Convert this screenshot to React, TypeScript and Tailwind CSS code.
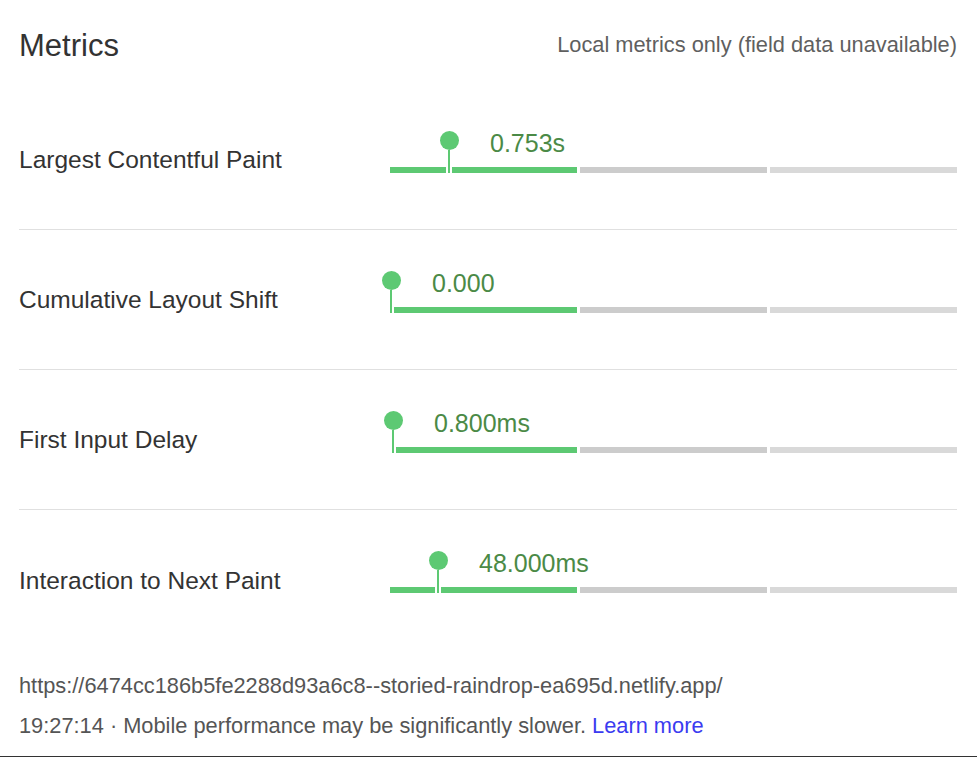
import React from "react";

type Metric = {
  label: string;
  value: string;
  pos: number;
};

const metrics: Metric[] = [
  { label: "Largest Contentful Paint", value: "0.753s", pos: 59 },
  { label: "Cumulative Layout Shift", value: "0.000", pos: 1 },
  { label: "First Input Delay", value: "0.800ms", pos: 3 },
  { label: "Interaction to Next Paint", value: "48.000ms", pos: 48 },
];

const Gauge = ({ value, pos }: { value: string; pos: number }) => {
  return (
    <div className="relative w-[567px] h-[60px]">
      <div className="flex gap-[3px] mt-[37px] h-[6px]">
        <div className="w-[187px] bg-[#5dc973]" />
        <div className="w-[187px] bg-[#cccccc]" />
        <div className="w-[187px] bg-[#d9d9d9]" />
      </div>
      {/* marker pin */}
      <div className="absolute top-[37px] w-[6px] h-[6px] bg-white" style={{ left: pos - 3 }} />
      <div className="absolute top-[1px] flex flex-col items-center w-[19px]" style={{ left: pos - 9.5 }}>
        <div className="w-[19px] h-[19px] rounded-full bg-[#5dc973]" />
        <div className="w-[2px] h-[23px] bg-[#5dc973]" />
      </div>
      <span
        className="absolute top-[1px] text-[25px] leading-[24px] text-[#4b8a46] whitespace-nowrap"
        style={{ left: pos + 41 }}
      >
        {value}
      </span>
    </div>
  );
};

const App = () => {
  return (
    <div className="w-[977px] h-[758px] bg-white overflow-hidden font-['Liberation_Sans',Arial,sans-serif]">
      <div className="pl-[19px] pr-[20px]">
        <header className="flex items-center justify-between h-[90px]">
          <h1 className="pt-[3px] text-[31px] text-[#333333]">Metrics</h1>
          <span className="text-[21.8px] text-[#5f5f5f]">Local metrics only (field data unavailable)</span>
        </header>
        {metrics.map((m, i) => (
          <div
            key={m.label}
            className={
              i < metrics.length - 1
                ? "flex items-center h-[140px] border-b border-[#e0e0e0]"
                : "flex items-center h-[140px]"
            }
          >
            <div className="w-[371px] mt-[2px] text-[24.5px] text-[#333333]">{m.label}</div>
            <Gauge value={m.value} pos={m.pos} />
          </div>
        ))}
        <div className="pt-[16px] text-[21.8px] leading-[40px] text-[#555555]">
          <div>https://6474cc186b5fe2288d93a6c8--storied-raindrop-ea695d.netlify.app/</div>
          <div>
            19:27:14 · Mobile performance may be significantly slower.{" "}
            <a href="#" className="text-[#3b3bf0]">
              Learn more
            </a>
          </div>
        </div>
      </div>
      <div className="mt-[10px] h-px bg-[#333333]" />
    </div>
  );
};

export default App;
